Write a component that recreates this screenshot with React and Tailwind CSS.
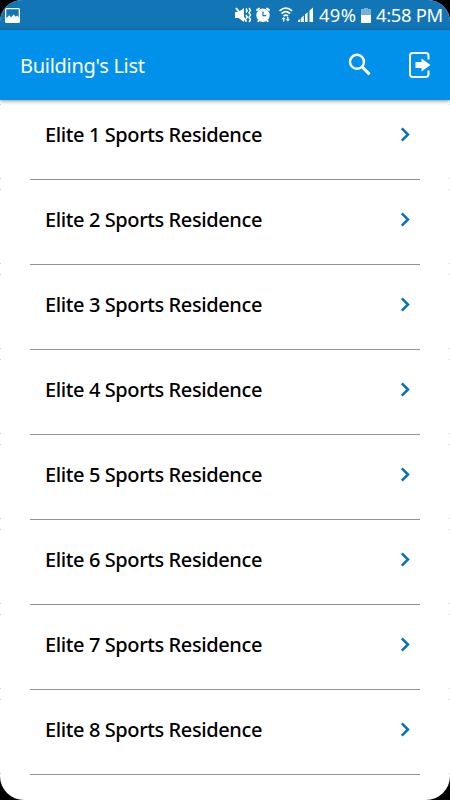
const buildings = [1, 2, 3, 4, 5, 6, 7, 8];

function StatusBar() {
  return (
    <div className="flex h-[30px] shrink-0 items-center bg-[#1276b6] text-white">
      <svg className="ml-[5px] h-[15px] w-[16px]" viewBox="0 0 16 15">
        <path fill="white" fillRule="evenodd" d="M1.5 0h12A1.5 1.5 0 0 1 15 1.5v12a1.5 1.5 0 0 1-1.5 1.5h-12A1.5 1.5 0 0 1 0 13.500v-12A1.500 1.500 0 0 1 1.500 0ZM1.300 1.200v9.300L4 7.300l2.200 2 2.500-2.800 2.100 2.300 1.400-1.300 1.500 2V1.200Z" />
      </svg>
      <svg className="ml-auto h-[30px] w-[82px] shrink-0" viewBox="234 0 82 30" fill="none" stroke="white">
        <path fill="white" stroke="none" d="M235 12h3.500l5.500-4v14l-5.500-4H235Z" />
        <path strokeWidth="2" d="m236 8 10.500 13.500" />
        <path strokeWidth="1.500" d="m246 8.500 1.200 2-1.200 2M246 15l1.200 2-1.200 2M249 8l1.500 2.300-1.500 2.400 1.500 2.300-1.500 2.400 1.500 2.300-1.500 2.300" />
        <circle cx="263" cy="15.300" r="6.700" fill="white" stroke="none" />
        <path strokeWidth="2" strokeLinecap="round" d="m257 10 2-1.500M267 8.500l2 1.500M258.800 20.500l-.5.700M267.200 20.500l.5.700" />
        <path stroke="#1276b6" strokeWidth="1.200" d="M263 11.500v4.200h3.200" />
        <path strokeWidth="1.700" d="M279.500 10.800q6.300-5.400 12.600 0M281.500 13.600q4.300-3.800 8.600 0M283.600 16q2.200-1.900 4.400 0" />
        <path fill="white" stroke="none" d="m281.500 19.300 2.100-2.300 2.100 2.300h-1.400v2.200H283v-2.200ZM287.200 19.200V17h1.300v2.200h1.400l-2 2.300-2.100-2.300Z" />
        <path fill="white" stroke="none" d="M298 22v-1.500l2.300-1.800V22ZM301.200 22v-4.300l2.600-2.200V22ZM305 22v-7.600l2.600-2.200V22ZM309.500 22V10.500l3.500-3V22Z" />
      </svg>
      <div className="ml-[3px] w-[41px] whitespace-nowrap text-[18.400px] leading-[30px] tracking-[0.300px]">49%</div>
      <svg className="ml-px h-[15px] w-[10px] shrink-0" viewBox="0 0 10 15">
        <path fill="#76b2d8" d="M3 0h4v1h3v7H0V1h3Z" />
        <path fill="white" d="M0 7h10v8H0Z" />
      </svg>
      <div className="mr-[6px] ml-[5px] w-[68px] whitespace-nowrap text-[18.400px] leading-[30px] tracking-[-0.300px]">4:58 PM</div>
    </div>
  );
}

function AppBar() {
  return (
    <header className="relative z-10 flex h-[70px] shrink-0 items-center bg-[#0291ea] text-white shadow-[0_1px_4px_rgba(0,0,0,0.45)]">
      <h1 className="mt-[1px] ml-[20px] text-[20px] tracking-[-0.280px] whitespace-nowrap">Building's List</h1>
      <svg className="ml-auto h-[24px] w-[24px]" viewBox="0 0 24 24" fill="none" stroke="white" aria-label="Search">
        <circle cx="9" cy="8.800" r="7" strokeWidth="2.400" />
        <path strokeWidth="3" d="m13.900 13.700 7.700 7.700" />
      </svg>
      <svg className="mr-[18px] ml-[36px] h-[28px] w-[24px]" viewBox="0 0 24 28" fill="none" stroke="white" aria-label="Log out">
        <path strokeWidth="2" d="M20.500 8.500V4.500A2.500 2.500 0 0 0 18 2H4.500A2.500 2.500 0 0 0 2 4.500v19A2.500 2.500 0 0 0 4.500 26H18a2.500 2.500 0 0 0 2.500-2.500V19.500" />
        <path fill="white" stroke="none" d="M7.500 11h6V7.500l9 6.500-9 6.500V17h-6Z" />
      </svg>
    </header>
  );
}

function EdgeTicks() {
  return (
    <span className="mb-px flex h-[75px] w-[1px] flex-col justify-between">
      <i className="h-px bg-[#d2d2d2]" />
      <i className="h-px bg-[#d2d2d2]" />
    </span>
  );
}

function BuildingRow({ number }) {
  return (
    <li className="flex h-[85px] shrink-0 items-end justify-between">
      <EdgeTicks />
      <div className="flex h-[85px] w-[390px] justify-between border-b border-[#929292] pt-[14px] pr-[9px] pl-[15px]">
        <span className="h-[52px] text-[20px] leading-[52px] font-medium tracking-[-0.400px] whitespace-nowrap text-black">Elite {number} Sports Residence</span>
        <svg className="mt-[18px] h-[15px] w-[11px]" viewBox="0 0 11 15" fill="none">
          <path d="m1.800 1.300 6.200 6.200-6.200 6.200" stroke="#0871b7" strokeWidth="2.500" />
        </svg>
      </div>
      <EdgeTicks />
    </li>
  );
}

export default function App() {
  return (
    <div className="h-[800px] w-[450px] overflow-hidden bg-black font-['Noto_Sans',sans-serif]">
      <main className="flex h-full flex-col overflow-hidden rounded-t-[22px] rounded-b-[24px] bg-white">
        <StatusBar />
        <AppBar />
        <ul className="-mt-[5px] flex flex-col">
          {buildings.map((number) => <BuildingRow key={number} number={number} />)}
        </ul>
      </main>
    </div>
  );
}
